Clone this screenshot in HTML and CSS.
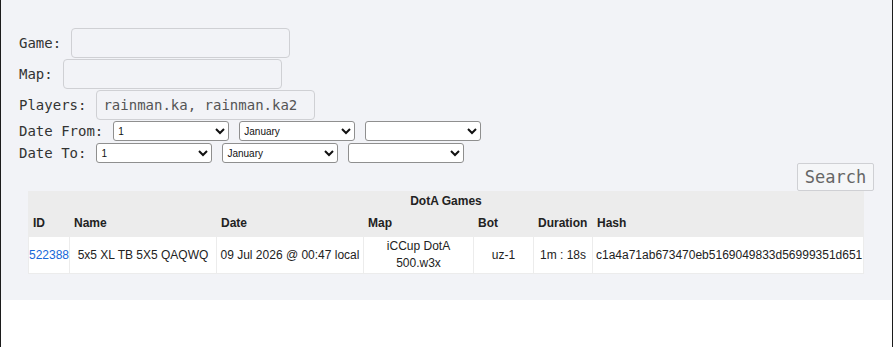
FILE: index.html
```html
<!DOCTYPE html>
<html lang="en">
<head>
    <meta charset="UTF-8">
    <meta name="viewport" content="width=device-width, initial-scale=1.0">
    <title>DotA Games</title>
    <link rel="stylesheet" href="styles.css">
</head>
<body>
    <div class="page">
        <div class="panel">
            <!-- Search filters -->
            <form class="filters" onsubmit="return false">
                <div class="row">
                    <label for="game">Game:</label>
                    <input type="text" id="game">
                </div>
                <div class="row">
                    <label for="map">Map:</label>
                    <input type="text" id="map">
                </div>
                <div class="row">
                    <label for="players">Players:</label>
                    <input type="text" id="players" value="rainman.ka, rainman.ka2">
                </div>
                <div class="row row-date">
                    <label>Date From:</label>
                    <select><option>1</option></select>
                    <select><option>January</option></select>
                    <select><option></option></select>
                </div>
                <div class="row row-date">
                    <label>Date To:</label>
                    <select><option>1</option></select>
                    <select><option>January</option></select>
                    <select><option></option></select>
                </div>
                <div class="actions">
                    <button type="submit" class="search-btn">Search</button>
                </div>
            </form>

            <!-- Results -->
            <table class="games">
                <colgroup>
                    <col class="c-id">
                    <col class="c-name">
                    <col class="c-date">
                    <col class="c-map">
                    <col class="c-bot">
                    <col class="c-dur">
                    <col>
                </colgroup>
                <thead>
                    <tr>
                        <th colspan="7" class="caption">DotA Games</th>
                    </tr>
                    <tr>
                        <th>ID</th>
                        <th>Name</th>
                        <th>Date</th>
                        <th>Map</th>
                        <th>Bot</th>
                        <th>Duration</th>
                        <th>Hash</th>
                    </tr>
                </thead>
                <tbody>
                    <tr>
                        <td class="id"><a href="#">522388</a></td>
                        <td>5x5 XL TB 5X5 QAQWQ</td>
                        <td>09 Jul 2026 @ 00:47 local</td>
                        <td>iCCup DotA<br>500.w3x</td>
                        <td>uz-1</td>
                        <td>1m : 18s</td>
                        <td class="hash">c1a4a71ab673470eb5169049833d56999351d651</td>
                    </tr>
                </tbody>
            </table>
        </div>
    </div>
</body>
</html>
```

FILE: styles.css
```css
:root {
    --panel-bg: #f2f3f7;
    --edge: #1c1c1c;
    --field-border: #cfd0d4;
    --head-bg: #ececec;
    --text-color: #222;
    --link-color: #1668d9;
}

* {
    box-sizing: border-box;
}

body {
    margin: 0;
    background: #fff;
}

.page {
    width: 893px;
    min-height: 347px;
    border-left: 1px solid var(--edge);
    border-right: 1px solid var(--edge);
}

.panel {
    height: 300px;
    background: var(--panel-bg);
    padding: 27px 18px 0 18px;
}

.filters {
    margin: 0;
}

.row {
    display: flex;
    align-items: center;
    gap: 10px;
    height: 31px;
    font-family: "DejaVu Sans Mono", monospace;
    font-size: 14px;
    color: #333;
}

.row label {
    white-space: nowrap;
}

.row input {
    width: 219px;
    height: 30px;
    border: 1px solid var(--field-border);
    border-radius: 4px;
    background: var(--panel-bg);
    padding: 0 6px;
    font-family: "DejaVu Sans Mono", monospace;
    font-size: 14px;
    color: #555;
    outline: none;
}

.row-date {
    height: 22px;
}

.row-date select {
    width: 116px;
    height: 20px;
    font-family: "Liberation Sans", Arial, sans-serif;
    font-size: 10px;
    background: #fff;
    border: 1px solid #8f8f8f;
    border-radius: 3px;
    color: #111;
}

.actions {
    display: flex;
    justify-content: flex-end;
    margin-top: -1px;
}

.search-btn {
    width: 77px;
    height: 28px;
    background: #f5f6f8;
    border: 1px solid var(--field-border);
    border-radius: 2px;
    font-family: "DejaVu Sans Mono", monospace;
    font-size: 17px;
    color: #666;
    padding: 0;
}

.games {
    width: 836px;
    margin: 0 0 0 9px;
    table-layout: fixed;
    border-collapse: separate;
    border-spacing: 1px;
    background: var(--head-bg);
    font-family: "Liberation Sans", Arial, sans-serif;
    font-size: 12px;
    color: var(--text-color);
}

.c-id { width: 40px; }
.c-name { width: 146px; }
.c-date { width: 146px; }
.c-map { width: 109px; }
.c-bot { width: 59px; }
.c-dur { width: 58px; }

.games th {
    text-align: left;
    font-weight: bold;
    padding: 6px 4px;
    line-height: 14px;
}

.games th.caption {
    text-align: center;
    padding: 2px 0 1px;
}

.games td {
    background: #fff;
    text-align: center;
    line-height: 17px;
    padding: 1px 0;
    white-space: nowrap;
}

.games td.id {
    text-align: left;
}

.games td.hash {
    text-align: left;
    padding-left: 3px;
}

.games a {
    color: var(--link-color);
    text-decoration: none;
}
```
